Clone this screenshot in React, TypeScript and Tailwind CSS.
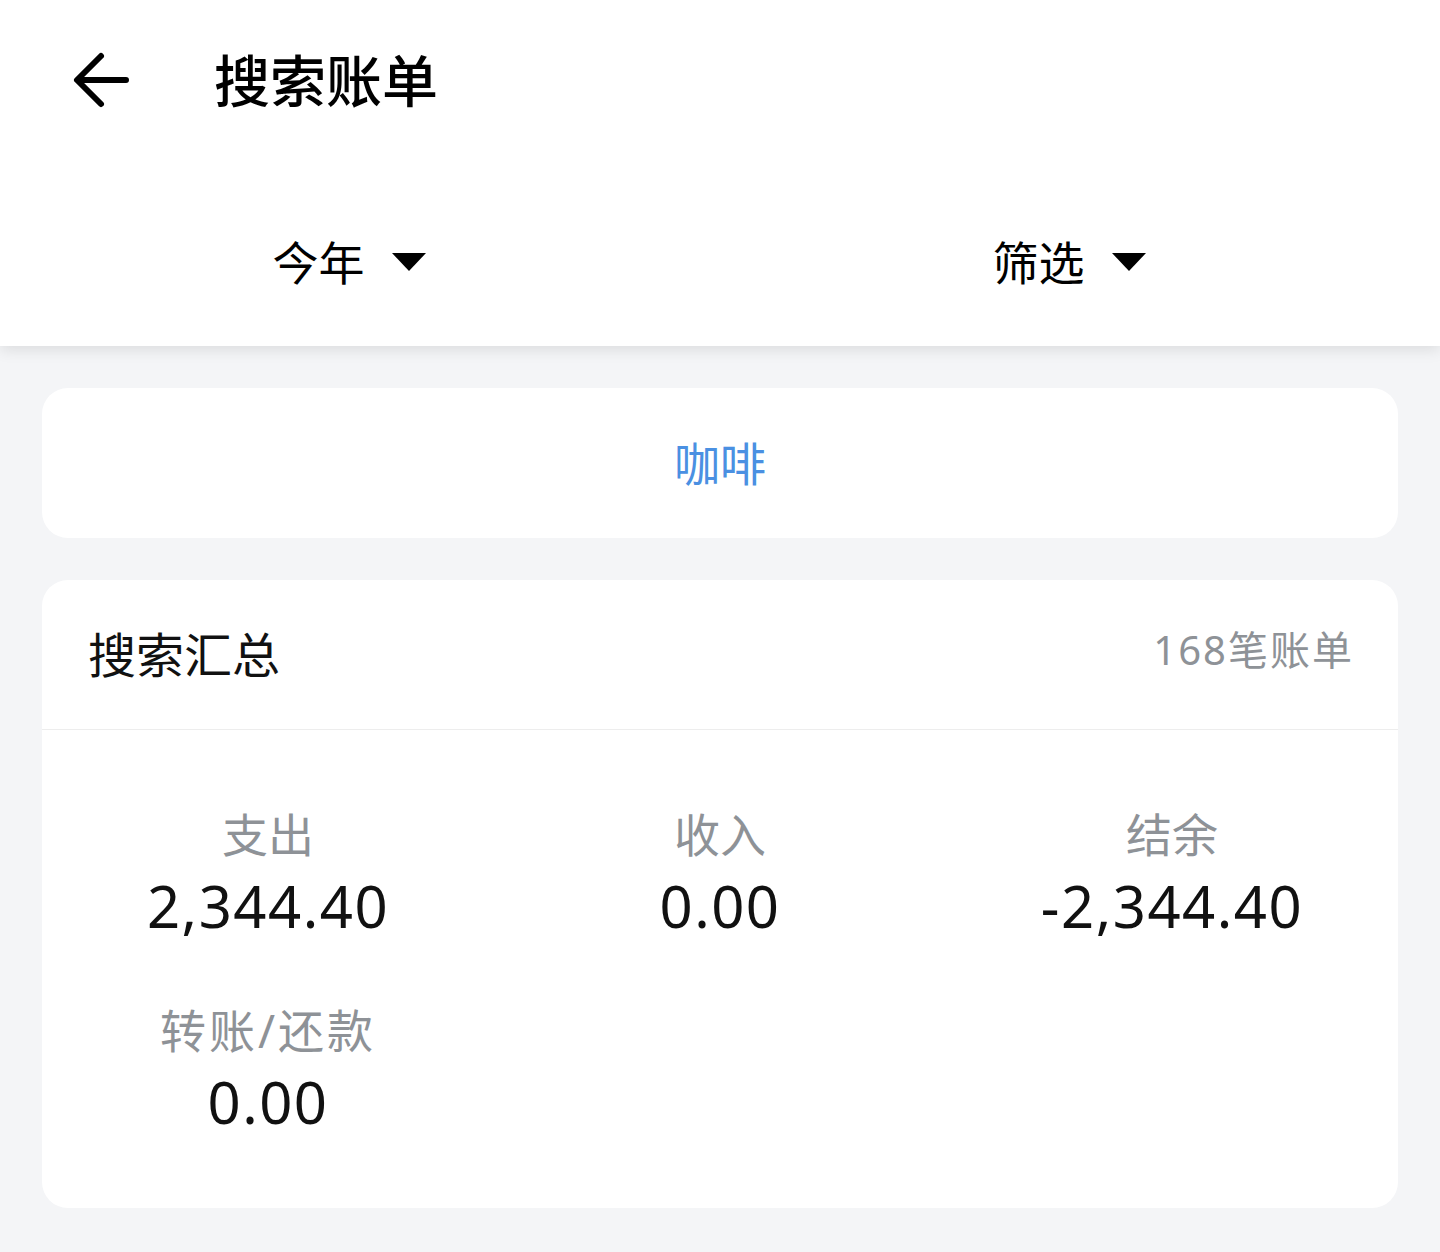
import React from "react";

const font = { fontFamily: '"Noto Sans", "Noto Sans CJK SC", sans-serif' };

function Caret() {
  return (
    <svg width="34" height="18" viewBox="0 0 34 18" className="ml-[27px]">
      <polygon points="0,0 34,0 17,18" fill="#000" />
    </svg>
  );
}

function Stat({ label, value, wide }: { label: string; value: string; wide?: boolean }) {
  return (
    <div className="flex flex-col items-center">
      <div className={wide ? "text-[46px] leading-[60px] text-[#8e9297] tracking-[3px]" : "text-[46px] leading-[60px] text-[#8e9297]"}>{label}</div>
      <div className="text-[58px] leading-[80px] text-[#111] mt-[2px] tracking-[1.5px]">{value}</div>
    </div>
  );
}

export default function App() {
  return (
    <div className="w-[1440px] h-[1252px] bg-[#f4f5f7] overflow-hidden" style={font}>
      <div className="relative bg-white h-[346px] shadow-[0_4px_14px_rgba(0,0,0,0.10)] z-10">
        <div className="flex items-center h-[160px] pl-[72px]">
          <svg width="58" height="58" viewBox="0 0 58 58">
            <path d="M54 29 H6 M29 5 L5 29 L29 53" fill="none" stroke="#000" strokeWidth="6" strokeLinecap="round" strokeLinejoin="round" />
          </svg>
          <div className="ml-[84px] text-[56px] font-medium text-black">搜索账单</div>
        </div>
        <div className="flex h-[186px] items-start pt-[72px]">
          <div className="flex-1 flex items-center justify-center pr-[22px]">
            <span className="text-[46px] leading-[60px] text-black">今年</span>
            <Caret />
          </div>
          <div className="flex-1 flex items-center justify-center pr-[22px]">
            <span className="text-[46px] leading-[60px] text-black">筛选</span>
            <Caret />
          </div>
        </div>
      </div>

      <div className="px-[42px] pt-[42px] flex flex-col gap-[42px]">
        <div className="bg-white rounded-[26px] h-[150px] flex items-center justify-center">
          <span className="text-[46px] text-[#4a90e2]">咖啡</span>
        </div>

        <div className="bg-white rounded-[26px] h-[628px] flex flex-col">
          <div className="h-[150px] flex items-center justify-between pl-[46px] pr-[44px] border-b border-[#ededed]">
            <span className="text-[48px] text-[#111]">搜索汇总</span>
            <span className="text-[40px] text-[#8e9297] -mt-[10px] tracking-[2px]">168笔账单</span>
          </div>
          <div className="grid grid-cols-3 pt-[74px] gap-y-[54px]">
            <Stat label="支出" value="2,344.40" />
            <Stat label="收入" value="0.00" />
            <Stat label="结余" value="-2,344.40" />
            <Stat label="转账/还款" value="0.00" wide />
          </div>
        </div>
      </div>
    </div>
  );
}
